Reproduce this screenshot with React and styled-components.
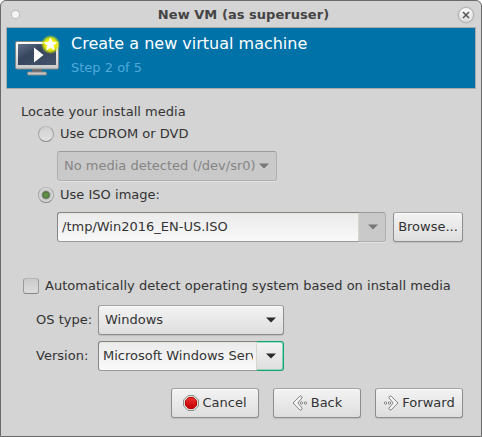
import React from "react";
import styled, { createGlobalStyle, css } from "styled-components";

const Global = createGlobalStyle`
  *, *::before, *::after { box-sizing: border-box; }
  html, body { margin: 0; background: #fff; }
  body { font: 13px/18px "DejaVu Sans", sans-serif; color: #333; overflow: hidden; }
  svg { display: block; flex: none; }
`;

const Window = styled.main`
  width: 482px;
  height: 437px;
  display: flex;
  flex-direction: column;
  background: #d4d4d4;
  border: 1px solid #6a6a6a;
  border-radius: 6px 6px 0 0;
`;

const TitleBar = styled.header`
  height: 26px;
  flex: none;
  display: grid;
  grid-template-columns: 20px 1fr 20px;
  align-items: center;
  padding: 0 4px 0 5px;
`;

const MenuDot = styled.span`
  width: 7px;
  height: 7px;
  margin-left: 6px;
  border-radius: 50%;
  background: #f4f4f4;
  box-shadow: 0 0 1px 1px #bcbcbc;
`;

const Title = styled.h1`
  margin: 1px 0 0 4px;
  text-align: center;
  font-size: 13px;
  line-height: 18px;
  font-weight: bold;
  letter-spacing: 0.04px;
  color: #444;
`;

const CloseButton = styled.button`
  width: 16px;
  height: 16px;
  padding: 0;
  margin: 1px 0 0 1px;
  display: grid;
  place-items: center;
  border: 1px solid #b0b0b0;
  border-radius: 50%;
  background: linear-gradient(#fafafa, #dcdcdc);
  box-shadow: 0 0 0 1px #c8c8c8;
`;

const Banner = styled.section`
  height: 62px;
  flex: none;
  margin: 0 5px;
  display: flex;
  background: #0072a8;
  border: 1px solid #aaa;
  padding: 7px 0 0 8px;
`;

const BannerText = styled.div`
  margin-left: 10px;
`;

const BannerTitle = styled.h2`
  margin: -2px 0 0;
  font-size: 16px;
  line-height: 22px;
  font-weight: normal;
  color: #fff;
`;

const BannerStep = styled.p`
  margin: 4px 0 0;
  line-height: 18px;
  color: #4fa9da;
`;

const Form = styled.form`
  display: flex;
  flex-direction: column;
  padding: 14px 17px 0 20px;
`;

const Row = styled.div`
  display: flex;
  align-items: center;
  height: ${(p) => p.$h || 30}px;
  margin-top: ${(p) => p.$gap || 0}px;
  padding-left: ${(p) => p.$indent || 0}px;
`;

const Label = styled.span`
  white-space: pre;
  width: ${(p) => (p.$w ? p.$w + "px" : "auto")};
  letter-spacing: 0.02px;
`;

const Radio = styled.span`
  width: 16px;
  height: 16px;
  margin-right: 6px;
  border: 1px solid #a2a2a2;
  border-top-color: #b8b8b8;
  border-bottom-color: #868686;
  border-radius: 50%;
  background: ${(p) =>
    p.$on
      ? "radial-gradient(circle at 7px 7px, #5f9044 0 2px, #4e6b40 3.2px, #c2c2c2 4.6px, #e2e2e2 7px)"
      : "linear-gradient(#d0d0d0, #e2e2e2)"};
`;

const CheckBox = styled.span`
  width: 16px;
  height: 16px;
  margin-right: 6px;
  border: 1px solid #9a9a9a;
  border-top-color: #b4b4b4;
  border-bottom-color: #868686;
  border-radius: 3px;
  background: linear-gradient(#cacaca, #dcdcdc);
`;

const raised = css`
  border: 1px solid #8e8e8e;
  border-top-color: #a4a4a4;
  border-radius: 3px;
  background: linear-gradient(#f3f3f3, #dedede);
  box-shadow: inset 0 1px #fafafa, 0 1px 1px #bdbdbd;
`;

const insensitive = css`
  border: 1px solid #b0b0b0;
  border-top-color: #9c9c9c;
  border-radius: 3px;
  background: #c9c9c9;
  color: #858585;
  box-shadow: 0 1px #e2e2e2;
`;

const Combo = styled.div`
  ${(p) => (p.$disabled ? insensitive : raised)}
  width: ${(p) => p.$w}px;
  height: 30px;
  display: flex;
  align-items: center;
  justify-content: space-between;
  padding: 0 7px 0 6px;
  white-space: pre;
`;

const Entry = styled.div`
  width: ${(p) => p.$w}px;
  height: 30px;
  border: 1px solid #858585;
  border-bottom-color: #9a9a9a;
  border-right: 0;
  border-radius: 3px 0 0 3px;
  background: linear-gradient(#ebebeb, #f9f9f9);
  box-shadow: inset 0 1px #e3e6dc, inset -1px 0 #d5d8c8;
  padding: 5px 4px;
`;

const EntryText = styled.div`
  overflow: hidden;
  white-space: pre;
`;

const DropButton = styled.span`
  ${(p) => (p.$focus ? raised : insensitive)}
  width: ${(p) => p.$w}px;
  height: 30px;
  display: flex;
  align-items: center;
  justify-content: center;
  padding-left: 2px;
  border-left: 0;
  border-radius: 0 3px 3px 0;
  ${(p) =>
    p.$focus &&
    css`
      border-color: #16a570;
      box-shadow: inset -1px 0 rgba(40, 190, 135, 0.5),
        inset 0 1px rgba(40, 190, 135, 0.4), inset 0 -1px rgba(40, 190, 135, 0.4);
    `}
`;

const Button = styled.button`
  ${raised}
  width: ${(p) => p.$w || 88}px;
  height: 30px;
  margin-left: ${(p) => p.$ml || 0}px;
  padding: 0;
  display: flex;
  align-items: center;
  justify-content: center;
  gap: 3px;
  font: inherit;
  color: #333;
`;

const Arrow = ({ color = "#2a2a2a" }) => (
  <svg width="10" height="6" viewBox="0 0 10 6">
    <path d="M0 .5h10L5 5.5z" fill={color} />
  </svg>
);

const MonitorIcon = () => (
  <svg width="46" height="42" viewBox="0 0 46 42">
    <defs>
      <radialGradient id="glow">
        <stop offset=".5" stopColor="#f4f400" />
        <stop offset=".7" stopColor="#e0e808" stopOpacity=".9" />
        <stop offset="1" stopColor="#b0cc20" stopOpacity="0.1" />
      </radialGradient>
      <linearGradient id="screen" x1="0" y1="0" x2="1" y2="1">
        <stop offset="0" stopColor="#62708a" />
        <stop offset=".4" stopColor="#36465c" />
        <stop offset="1" stopColor="#45536a" />
      </linearGradient>
      <linearGradient id="bezel" x1="0" y1="0" x2="0" y2="1">
        <stop offset="0" stopColor="#fff" />
        <stop offset="1" stopColor="#c8c8c8" />
      </linearGradient>
    </defs>
    <path d="M17 34h10v4h-10z" fill="#666" />
    <rect x="12.500" y="37" width="19" height="3" rx="1" fill="#c8c8c8" stroke="#858585" />
    <rect x=".5" y="6.500" width="43" height="27.500" rx="1.500" fill="url(#bezel)" stroke="#888" />
    <rect x="3" y="9" width="38" height="21" fill="url(#screen)" />
    <path d="M19 12.500v15l9.500-7.500z" fill="#fff" />
    <circle cx="35.500" cy="9.500" r="9.500" fill="url(#glow)" />
    <path
      d="M36 2.500l2 4.600 5 .5-3.700 3.400 1 4.900-4.300-2.500-4.300 2.500 1-4.900L29 7.600l5-.5z"
      transform="translate(4.500 1) scale(.86)"
      fill="#fff"
      stroke="#fff"
      strokeLinejoin="round"
    />
  </svg>
);

const StopIcon = () => (
  <svg width="16" height="16" viewBox="0 0 16 16">
    <defs>
      <linearGradient id="red" x1="0" y1="0" x2="0" y2="1">
        <stop offset="0" stopColor="#f03030" />
        <stop offset="1" stopColor="#c00000" />
      </linearGradient>
    </defs>
    <path d="M5 .6h6L15.400 5v6L11 15.400H5L.6 11V5z" fill="#e6e6e2" stroke="#858780" />
    <path d="M5.700 2.500h4.600l3.200 3.200v4.600l-3.200 3.200H5.700l-3.200-3.200V5.700z" fill="url(#red)" stroke="#b80000" />
  </svg>
);

const StepIcon = ({ forward }) => (
  <svg width="16" height="16" viewBox="0 0 16 16">
    <g transform={forward ? "matrix(-1 0 0 1 16 0)" : undefined} stroke="#858585" fill="#f4f4f4">
      <path d="M8 .9 1 8l7 7.100c1.500 0 2.300-.7 2-2L5.800 8 10 2.900C10.300 1.600 9.500.9 8 .9z" strokeLinejoin="round" />
      <circle cx="9.500" cy="8" r="1.200" />
      <circle cx="13.500" cy="8" r="1.200" />
    </g>
  </svg>
);

export default function App() {
  return (
    <>
      <Global />
      <Window>
        <TitleBar>
          <MenuDot />
          <Title>New VM (as superuser)</Title>
          <CloseButton aria-label="Close">
            <svg width="8" height="8" viewBox="0 0 8 8">
              <path d="M1 1l6 6M7 1L1 7" stroke="#555" strokeWidth="1.500" />
            </svg>
          </CloseButton>
        </TitleBar>
        <Banner>
          <MonitorIcon />
          <BannerText>
            <BannerTitle>Create a new virtual machine</BannerTitle>
            <BannerStep>Step 2 of 5</BannerStep>
          </BannerText>
        </Banner>
        <Form>
          <Row $h={18}>
            <Label>Locate your install media</Label>
          </Row>
          <Row $h={20} $gap={3} $indent={17}>
            <Radio />
            <Label>Use CDROM or DVD</Label>
          </Row>
          <Row $gap={7} $indent={36}>
            <Combo $w={220} $disabled>
              No media detected (/dev/sr0)
              <Arrow color="#777" />
            </Combo>
          </Row>
          <Row $h={20} $gap={4} $indent={17}>
            <Radio $on />
            <Label>Use ISO image:</Label>
          </Row>
          <Row $gap={7} $indent={36}>
            <Entry $w={302}>
              <EntryText>/tmp/Win2016_EN-US.ISO</EntryText>
            </Entry>
            <DropButton $w={27}>
              <Arrow color="#777" />
            </DropButton>
            <Button type="button" $w={70} $ml={7}>
              Browse...
            </Button>
          </Row>
          <Row $h={20} $gap={34} $indent={2}>
            <CheckBox />
            <Label>Automatically detect operating system based on install media</Label>
          </Row>
          <Row $gap={9} $indent={15}>
            <Label $w={62}>OS type:</Label>
            <Combo $w={186}>
              Windows
              <Arrow />
            </Combo>
          </Row>
          <Row $gap={6} $indent={15}>
            <Label $w={62}>Version:</Label>
            <Entry $w={159}>
              <EntryText>Microsoft Windows Server 2016</EntryText>
            </Entry>
            <DropButton $w={27} $focus>
              <Arrow />
            </DropButton>
          </Row>
          <Row $gap={17} $indent={150}>
            <Button type="button">
              <StopIcon />
              Cancel
            </Button>
            <Button type="button" $ml={14}>
              <StepIcon />
              Back
            </Button>
            <Button type="button" $ml={14}>
              <StepIcon forward />
              Forward
            </Button>
          </Row>
        </Form>
      </Window>
    </>
  );
}
